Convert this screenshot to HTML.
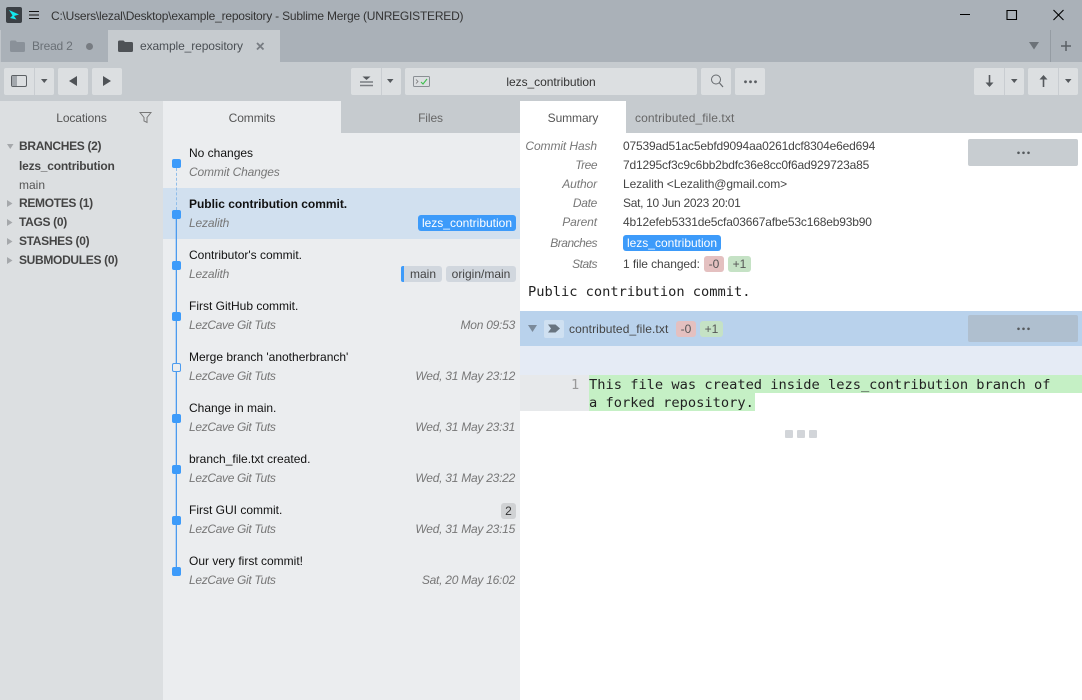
<!DOCTYPE html>
<html><head><meta charset="utf-8"><title>Sublime Merge</title>
<style>
html,body{margin:0;padding:0}
body{width:1082px;height:700px;overflow:hidden;position:relative;background:#fff;font-family:"Liberation Sans",sans-serif;font-size:12px;color:#333}
div,svg{position:absolute}
.t{white-space:nowrap;line-height:16px;height:16px}
.b{background:#dcdfe1;border-radius:2px;height:27px;top:68px}
.d{background:#c9cdd1;width:1px;height:27px;top:68px}
.ct{left:189px;color:#111;letter-spacing:0}
.cs{left:189px;color:#777;font-style:italic;letter-spacing:-.15px}
.lc{letter-spacing:-.33px}
.dt{right:567px;color:#777;font-style:italic;letter-spacing:-.25px}
.dot{left:172px;width:9px;height:9px;border-radius:2px;background:#3d9bfa}
.l{right:485px;color:#777;font-style:italic;letter-spacing:-.1px}
.n{letter-spacing:-.5px}
.v{left:623px;color:#444;letter-spacing:-.17px}
.h{left:19px;font-weight:bold;color:#444;letter-spacing:-.32px}
.tag{height:16px;line-height:16px;border-radius:3px;text-align:center;white-space:nowrap}
.m{font-family:"DejaVu Sans Mono","Liberation Mono",monospace;font-size:13.7px;line-height:18px;height:18px;white-space:pre;color:#222}
</style></head><body>
<div style="left:0;top:0;width:1082px;height:62px;background:#aab1b8"></div>
<svg style="left:6px;top:7px" width="16" height="16" viewBox="0 0 16 16"><rect width="16" height="16" rx="2" fill="#3b4045"/><path d="M3 3L13 7.500 8 9 10.500 12.500 4 11 6.500 8.500z" fill="#14e8ee"/></svg>
<svg style="left:29px;top:10px" width="10" height="10"><path d="M0 1.500H10M0 5H10M0 8.500H10" stroke="#111" stroke-width="1"/></svg>
<div class="t" style="left:51px;top:8px;color:#333;letter-spacing:-.22px">C:\Users\lezal\Desktop\example_repository - Sublime Merge (UNREGISTERED)</div>
<svg style="left:955px;top:5px" width="120" height="20"><path d="M5 9.500H15M52 5.500H61.500V14.500H52zM98.500 5L108.500 15M108.500 5L98.500 15" fill="none" stroke="#000" stroke-width="1.100"/></svg>

<div style="left:0;top:30px;width:1px;height:32px;background:#c0c5ca"></div>
<svg style="left:10px;top:40px" width="16" height="13"><path d="M0 2Q0 .5 1.500 .5H5.500L7 2H13.500Q15 2 15 3.500V10.500Q15 12 13.500 12H1.500Q0 12 0 10.500z" fill="#8a9199"/></svg>
<div class="t" style="left:32px;top:38px;color:#6a7076;letter-spacing:-.2px">Bread 2</div>
<div style="left:85.5px;top:42.500px;width:7px;height:7px;border-radius:50%;background:#777c82"></div>
<div style="left:108px;top:30px;width:172px;height:32px;background:#c6cbcf"></div>
<svg style="left:118px;top:40px" width="16" height="13"><path d="M0 2Q0 .5 1.500 .5H5.500L7 2H13.500Q15 2 15 3.500V10.500Q15 12 13.500 12H1.500Q0 12 0 10.500z" fill="#4e5256"/></svg>
<div class="t" style="left:140px;top:38px;color:#4a4f54;letter-spacing:-.1px">example_repository</div>
<svg style="left:256px;top:41.500px" width="9" height="9"><path d="M1 1L7.500 7.500M7.500 1L1 7.500" stroke="#777c82" stroke-width="1.800"/></svg>
<svg style="left:1029px;top:42px" width="11" height="8"><path d="M0 0H10L5 7.500z" fill="#6c7278"/></svg>
<div style="left:1050px;top:30px;width:1px;height:32px;background:#959ca3"></div>
<svg style="left:1061px;top:41px" width="11" height="11"><path d="M5 0V10M0 5H10" stroke="#5b6066" stroke-width="1.500"/></svg>

<div style="left:0;top:62px;width:1082px;height:39px;background:#c6cbcf"></div>
<div class="b" style="left:4px;width:50px"></div><div class="d" style="left:34px"></div>
<svg style="left:11px;top:75px" width="16" height="13"><rect x=".5" y=".5" width="15" height="11" rx="1.500" fill="#dcdfe1" stroke="#5c6064"/><rect x="1" y="1" width="5" height="10" fill="#a2a7ac"/></svg>
<svg style="left:41px;top:79px" width="7" height="5"><path d="M0 0H6.500L3.250 4z" fill="#55595d"/></svg>
<div class="b" style="left:58px;width:30px"></div>
<svg style="left:69px;top:76px" width="9" height="11"><path d="M8 0V10L0 5z" fill="#4f5357"/></svg>
<div class="b" style="left:92px;width:30px"></div>
<svg style="left:103px;top:76px" width="9" height="11"><path d="M0 0V10L8 5z" fill="#4f5357"/></svg>

<div class="b" style="left:351px;width:50px"></div><div class="d" style="left:381px"></div>
<svg style="left:360px;top:75px" width="13" height="13"><path d="M2.500 1.500H10.500L6.500 5z" fill="#55595d"/><path d="M0 7H13M0 10.500H13" stroke="#7a7e82" stroke-width="1.500"/></svg>
<svg style="left:387px;top:79px" width="7" height="5"><path d="M0 0H6.500L3.250 4z" fill="#55595d"/></svg>
<div class="b" style="left:405px;width:292px"></div>
<svg style="left:413px;top:76px" width="18" height="12"><rect x=".5" y=".5" width="16" height="10" rx="1" fill="none" stroke="#8a8f94"/><path d="M3 3.500L5 5.500 3 7.500" fill="none" stroke="#777" stroke-width=".8"/><path d="M8 6L10 8 14 3" fill="none" stroke="#3fbf4f" stroke-width="1.100"/></svg>
<div class="t" style="left:405px;top:74px;width:292px;text-align:center;color:#333;letter-spacing:-.05px">lezs_contribution</div>
<div class="b" style="left:701px;width:30px"></div>
<svg style="left:710px;top:74px" width="14" height="14"><circle cx="6" cy="5.500" r="4.500" fill="none" stroke="#666a6e"/><path d="M9.500 9L13 13" stroke="#666a6e" stroke-width="1.200"/></svg>
<div class="b" style="left:735px;width:30px"></div>
<svg style="left:744px;top:80px" width="13" height="4"><circle cx="1.500" cy="1.800" r="1.400" fill="#5a5e62"/><circle cx="6.500" cy="1.800" r="1.400" fill="#5a5e62"/><circle cx="11.500" cy="1.800" r="1.400" fill="#5a5e62"/></svg>
<div class="b" style="left:974px;width:50px"></div><div class="d" style="left:1004px"></div>
<svg style="left:984px;top:74px" width="11" height="14"><path d="M5.500 1V10" stroke="#55595d" stroke-width="1.600"/><path d="M1.500 8.500H9.500L5.500 13z" fill="#55595d"/></svg>
<svg style="left:1011px;top:79px" width="7" height="5"><path d="M0 0H6.500L3.250 4z" fill="#55595d"/></svg>
<div class="b" style="left:1028px;width:50px"></div><div class="d" style="left:1058px"></div>
<svg style="left:1038px;top:74px" width="11" height="14"><path d="M5.500 4V13" stroke="#55595d" stroke-width="1.600"/><path d="M1.500 5.500H9.500L5.500 1z" fill="#55595d"/></svg>
<svg style="left:1065px;top:79px" width="7" height="5"><path d="M0 0H6.500L3.250 4z" fill="#55595d"/></svg>

<div style="left:0;top:101px;width:163px;height:599px;background:#dcdfe1"></div>
<div class="t" style="left:0;top:110px;width:163px;text-align:center;color:#555;letter-spacing:-.1px">Locations</div>
<svg style="left:139px;top:111px" width="13" height="13"><path d="M1 1.500H12L8 6.500V11.500L5 10V6.500z" fill="none" stroke="#777"/></svg>
<svg style="left:7px;top:144px" width="7" height="6"><path d="M0 0H6.500L3.250 5z" fill="#a5a8ab"/></svg>
<div class="t h" style="top:138px">BRANCHES (2)</div>
<div class="t" style="left:19px;top:158px;font-weight:bold;color:#444;letter-spacing:-.22px">lezs_contribution</div>
<div class="t" style="left:19px;top:177px;color:#555">main</div>
<svg style="left:7px;top:200px" width="7" height="8"><path d="M0 0V7L5.500 3.500z" fill="#a5a8ab"/></svg>
<div class="t h" style="top:195px">REMOTES (1)</div>
<svg style="left:7px;top:219px" width="7" height="8"><path d="M0 0V7L5.500 3.500z" fill="#a5a8ab"/></svg>
<div class="t h" style="top:214px">TAGS (0)</div>
<svg style="left:7px;top:238px" width="7" height="8"><path d="M0 0V7L5.500 3.500z" fill="#a5a8ab"/></svg>
<div class="t h" style="top:233px">STASHES (0)</div>
<svg style="left:7px;top:257px" width="7" height="8"><path d="M0 0V7L5.500 3.500z" fill="#a5a8ab"/></svg>
<div class="t h" style="top:252px">SUBMODULES (0)</div>

<div style="left:163px;top:101px;width:178px;height:32px;background:#ebedef"></div>
<div class="t" style="left:163px;top:110px;width:178px;text-align:center;color:#555;letter-spacing:-.1px">Commits</div>
<div style="left:341px;top:101px;width:179px;height:32px;background:#c6cbcf"></div>
<div class="t" style="left:341px;top:110px;width:179px;text-align:center;color:#666;letter-spacing:-.1px">Files</div>
<div style="left:520px;top:101px;width:106px;height:32px;background:#fff"></div>
<div class="t" style="left:520px;top:110px;width:106px;text-align:center;color:#555;letter-spacing:-.1px">Summary</div>
<div style="left:626px;top:101px;width:456px;height:32px;background:#c6cbcf"></div>
<div class="t" style="left:635px;top:110px;color:#666;letter-spacing:.1px">contributed_file.txt</div>

<div style="left:163px;top:133px;width:357px;height:567px;background:#ebedef"></div>
<div style="left:163px;top:188px;width:357px;height:51px;background:#d1e0ef"></div>
<div style="left:176px;top:168px;width:0;height:42px;border-left:1px dashed #8fbdea"></div>
<div style="left:176px;top:214px;width:1px;height:357px;background:#4b9bef;box-shadow:-1px 0 0 rgba(75,155,239,.3)"></div>
<div class="dot" style="top:159px"></div>
<div class="dot" style="top:210px"></div>
<div class="dot" style="top:261px"></div>
<div class="dot" style="top:312px"></div>
<div class="dot" style="top:363px;background:#ebedef;border:1px solid #4b9bef;width:7px;height:7px"></div>
<div class="dot" style="top:414px"></div>
<div class="dot" style="top:465px"></div>
<div class="dot" style="top:516px"></div>
<div class="dot" style="top:567px"></div>

<div class="t ct" style="top:145px">No changes</div><div class="t cs" style="top:164px">Commit Changes</div>
<div class="t ct" style="top:196px;font-weight:bold;letter-spacing:-.02px">Public contribution commit.</div><div class="t cs" style="top:215px">Lezalith</div>
<div class="tag" style="left:418px;top:215px;width:98px;background:#3d9bfa;color:#fff">lezs_contribution</div>
<div class="t ct" style="top:247px">Contributor's commit.</div><div class="t cs" style="top:266px">Lezalith</div>
<div class="tag" style="left:401px;top:266px;width:41px;background:#d1d7de;color:#444;text-indent:3px">main</div>
<div style="left:401px;top:266px;width:3px;height:16px;background:#3d9bfa;border-radius:2px 0 0 2px"></div>
<div class="tag" style="left:446px;top:266px;width:70px;background:#d1d7de;color:#444">origin/main</div>
<div class="t ct" style="top:298px">First GitHub commit.</div><div class="t cs lc" style="top:317px">LezCave Git Tuts</div><div class="t dt" style="top:317px">Mon 09:53</div>
<div class="t ct" style="top:349px">Merge branch 'anotherbranch'</div><div class="t cs lc" style="top:368px">LezCave Git Tuts</div><div class="t dt" style="top:368px">Wed, 31 May 23:12</div>
<div class="t ct" style="top:400px">Change in main.</div><div class="t cs lc" style="top:419px">LezCave Git Tuts</div><div class="t dt" style="top:419px">Wed, 31 May 23:31</div>
<div class="t ct" style="top:451px">branch_file.txt created.</div><div class="t cs lc" style="top:470px">LezCave Git Tuts</div><div class="t dt" style="top:470px">Wed, 31 May 23:22</div>
<div class="t ct" style="top:502px">First GUI commit.</div><div class="t cs lc" style="top:521px">LezCave Git Tuts</div><div class="t dt" style="top:521px">Wed, 31 May 23:15</div>
<div class="tag" style="left:501px;top:503px;width:15px;background:#d0d2d4;color:#333">2</div>
<div class="t ct" style="top:553px">Our very first commit!</div><div class="t cs lc" style="top:572px">LezCave Git Tuts</div><div class="t dt" style="top:572px">Sat, 20 May 16:02</div>

<div class="t l" style="top:138px">Commit Hash</div><div class="t v" style="top:138px">07539ad51ac5ebfd9094aa0261dcf8304e6ed694</div>
<div class="t l n" style="top:157px">Tree</div><div class="t v" style="top:157px">7d1295cf3c9c6bb2bdfc36e8cc0f6ad929723a85</div>
<div class="t l" style="top:176px">Author</div><div class="t v" style="top:176px;letter-spacing:-.1px">Lezalith &lt;Lezalith@gmail.com&gt;</div>
<div class="t l" style="top:195px;letter-spacing:-.3px">Date</div><div class="t v" style="top:195px;letter-spacing:-.3px">Sat, 10 Jun 2023 20:01</div>
<div class="t l" style="top:214px">Parent</div><div class="t v" style="top:214px">4b12efeb5331de5cfa03667afbe53c168eb93b90</div>
<div class="t l n" style="top:235px">Branches</div><div class="tag" style="left:623px;top:235px;width:98px;background:#3d9bfa;color:#fff">lezs_contribution</div>
<div class="t l n" style="top:256px">Stats</div><div class="t v" style="top:256px;letter-spacing:-.08px">1 file changed:</div>
<div class="tag" style="left:704px;top:256px;width:20px;background:#e4c0c0;color:#555">-0</div>
<div class="tag" style="left:728px;top:256px;width:23px;background:#c5e2c5;color:#555">+1</div>
<div style="left:968px;top:139px;width:110px;height:27px;background:#c8cdd1;border-radius:2px"></div>
<svg style="left:1017px;top:151px" width="13" height="4"><circle cx="1.500" cy="1.800" r="1.300" fill="#55595d"/><circle cx="6.500" cy="1.800" r="1.300" fill="#55595d"/><circle cx="11.500" cy="1.800" r="1.300" fill="#55595d"/></svg>
<div class="m" style="left:528px;top:283px">Public contribution commit.</div>

<div style="left:520px;top:311px;width:562px;height:35px;background:#b9d2ec"></div>
<svg style="left:528px;top:325px" width="10" height="8"><path d="M0 0H9L4.500 7z" fill="#7b8a9a"/></svg>
<div style="left:544px;top:320px;width:20px;height:18px;border-radius:2px;background:#cfe0f1"></div>
<svg style="left:548px;top:324px" width="13" height="10"><path d="M0 .5H7.500L12 4.500 7.500 8.500H0L3 4.500z" fill="#687480"/></svg>
<div class="t" style="left:569px;top:321px;color:#444;letter-spacing:.1px">contributed_file.txt</div>
<div class="tag" style="left:676px;top:321px;width:20px;background:#e4c0c0;color:#555">-0</div>
<div class="tag" style="left:700px;top:321px;width:23px;background:#c5e2c5;color:#555">+1</div>
<div style="left:968px;top:315px;width:110px;height:27px;background:#afbfcf;border-radius:2px"></div>
<svg style="left:1017px;top:327px" width="13" height="4"><circle cx="1.500" cy="1.800" r="1.300" fill="#55595d"/><circle cx="6.500" cy="1.800" r="1.300" fill="#55595d"/><circle cx="11.500" cy="1.800" r="1.300" fill="#55595d"/></svg>
<div style="left:520px;top:346px;width:562px;height:29px;background:#e5ebf5"></div>
<div style="left:520px;top:375px;width:69px;height:36px;background:#e7e9eb"></div>
<div style="left:589px;top:375px;width:493px;height:18px;background:#c5f0c5"></div>
<div style="left:589px;top:393px;width:166px;height:18px;background:#c5f0c5"></div>
<div class="m" style="left:571px;top:376px;color:#999">1</div>
<div class="m" style="left:589px;top:376px">This file was created inside lezs_contribution branch of</div>
<div class="m" style="left:589px;top:394px">a forked repository.</div>
<div style="left:785px;top:430px;width:8px;height:8px;border-radius:1px;background:#d2d5d9"></div>
<div style="left:797px;top:430px;width:8px;height:8px;border-radius:1px;background:#d2d5d9"></div>
<div style="left:809px;top:430px;width:8px;height:8px;border-radius:1px;background:#d2d5d9"></div>
</body></html>
